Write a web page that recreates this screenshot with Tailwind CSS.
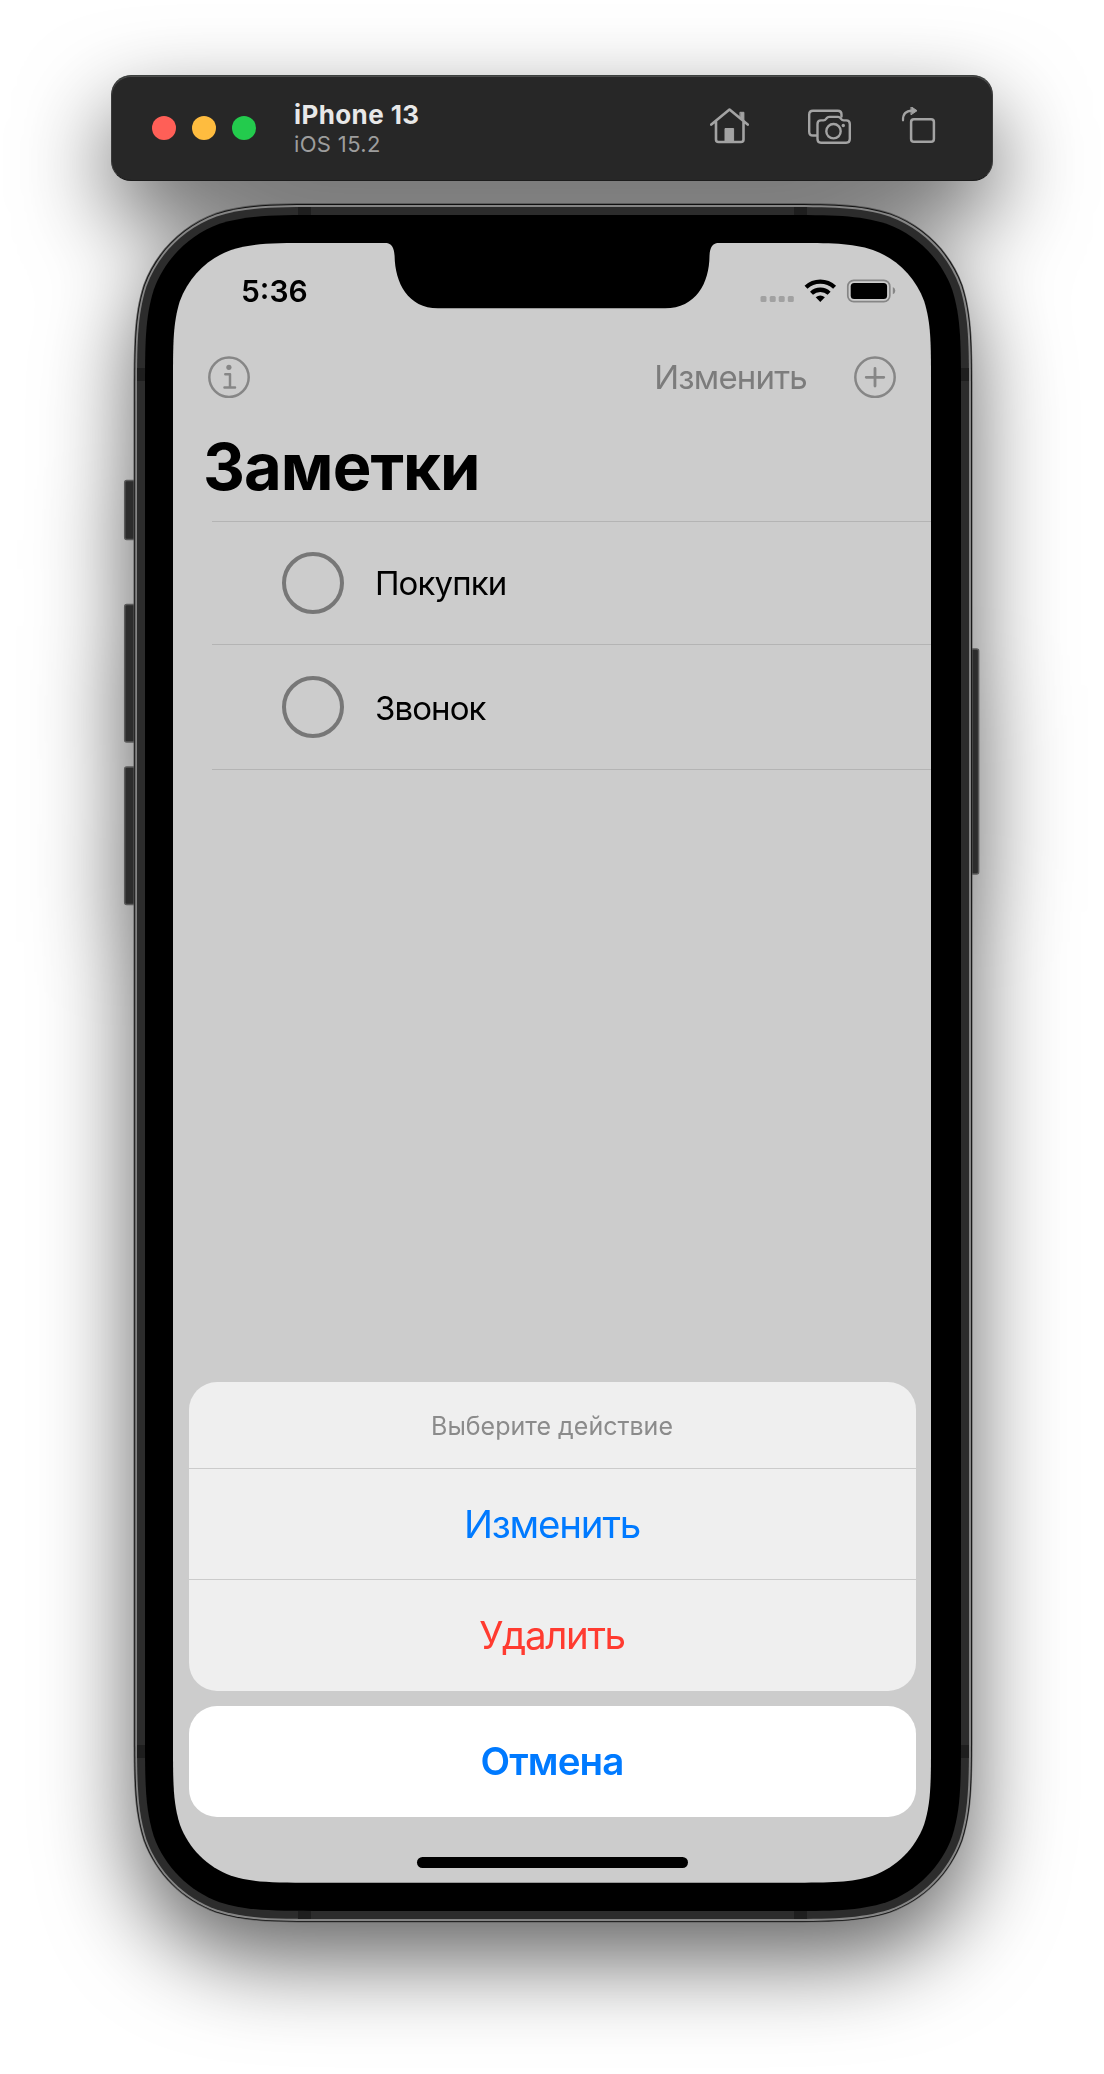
<!DOCTYPE html>
<html lang="ru">
<head>
<meta charset="utf-8">
<title>iPhone 13</title>
<script src="https://cdn.jsdelivr.net/npm/@tailwindcss/browser@4"></script>
</head>
<body class="bg-white font-['Inter',sans-serif]">
<div class="w-[1104px] h-[2074px] overflow-hidden">
<div class="w-[1104px] h-[2074px] pt-[75px] flex flex-col drop-shadow-[0_37px_45px_rgba(0,0,0,0.61)]">

  <!-- Simulator title bar -->
  <header class="ml-[111px] w-[882px] h-[106px] shrink-0 rounded-[20px] bg-[#272727] border border-t-[#3c403e] border-b-[#1c1c1c] border-x-[#3a3a3a] flex items-center pl-[40px] pr-[55px] shadow-[inset_0_1px_0_#4c4c4c]">
    <div class="flex gap-4">
      <span class="size-6 rounded-full bg-[#ff5f57]"></span>
      <span class="size-6 rounded-full bg-[#febc3f]"></span>
      <span class="size-6 rounded-full bg-[#23cb4d]"></span>
    </div>
    <div class="ml-[38px] pt-[2px] flex flex-col">
      <span class="text-[26px] leading-[30px] font-bold tracking-[0.4px] text-[#e8e8e8]">iPhone 13</span>
      <span class="text-[22px] leading-[28px] tracking-[0.35px] text-[#9d9d9d]">iOS 15.2</span>
    </div>
    <div class="ml-auto pb-[3px] flex text-[#a3a3a3]">
      <svg width="40" height="40" viewBox="710 107 40 40" fill="none" stroke="currentColor" stroke-width="2.6" stroke-linecap="round" stroke-linejoin="round"><path d="M711.3 124.6 729.5 109.5 747.7 124.6M716 121.5V139.5Q716 142 718.500 142H741Q743.500 142 743.500 139.500V121.500"/><path d="M740.300 112.300h3.600v8.700l-3.600-3z" fill="currentColor" stroke-width="1"/><path d="M725 142V128.500h8.600V142z" fill="currentColor" stroke-width="1"/></svg>
      <svg class="ml-[57px]" width="45" height="40" viewBox="807 107 45 40" fill="none" stroke="currentColor" stroke-width="2.4" stroke-linejoin="round" stroke-linecap="round"><path d="M816.500 135.500H813Q809.200 135.500 809.200 131.700V114.500Q809.200 110.700 813 110.700H837.700Q841.500 110.700 841.500 114.500V116.500"/><path d="M821 120.400H823.500Q825.200 120.400 826 119L826.800 118Q827.600 116.900 829.200 116.900H838Q839.600 116.900 840.400 118L841.200 119Q842 120.400 843.700 120.400H846.200Q849.800 120.400 849.800 124V139Q849.800 142.700 846.200 142.700H821Q817.500 142.700 817.500 139V124Q817.500 120.400 821 120.400Z"/><circle cx="833.500" cy="131.200" r="7.200"/><circle cx="843.300" cy="125.500" r="1.700" fill="currentColor" stroke="none"/></svg>
      <svg class="ml-[49px]" width="36" height="40" viewBox="901 106 36 40" fill="none" stroke="currentColor" stroke-width="2.500" stroke-linecap="round"><rect x="911.100" y="118.200" width="22.800" height="22.500" rx="2.800"/><path d="M903 119.300Q902.700 110 912 109.700" stroke-width="2.200"/><path d="M911.300 105.800 917 109.700 911.300 113.600Z" fill="currentColor" stroke-width="1" stroke-linejoin="round"/></svg>
    </div>
  </header>

  <!-- Device -->
  <main class="relative ml-[134px] mt-[22px] w-[838px] h-[1720px] shrink-0">
    <svg class="absolute left-0 top-0 overflow-visible" width="838" height="1720" viewBox="134 203 838 1720">
      <g fill="#2c2c2c" stroke="#5a5a5a" stroke-width="1.5">
        <rect x="124.700" y="480.500" width="14" height="59" rx="2"/>
        <rect x="124.700" y="604.500" width="14" height="137.500" rx="2"/>
        <rect x="124.700" y="767" width="14" height="137.500" rx="2"/>
        <rect x="965" y="649" width="13.600" height="225" rx="2"/>
      </g>
      <path class="shell" data-box="133.500 203 972.500 1922.500 130" fill="#5c5c5c"/>
      <path class="shell" data-box="134.300 204 971.900 1921.800 129" fill="#111"/>
      <path class="shell" data-box="135.200 205 971 1921 128" fill="#858585"/>
      <path class="shell" data-box="137 207 969 1919 126" fill="#2c2c2c"/>
      <path d="M298 207h13v8h-13zM794 207h13v8h-13zM298 1911h13v8h-13zM794 1911h13v8h-13zM137 368h8v13h-8zM961 368h8v13h-8zM137 1745h8v13h-8zM961 1745h8v13h-8z" fill="#1e1e1e"/>
      <path class="shell" data-box="145 215 961 1911 118" fill="#000"/>
      <path class="shell" data-box="173 243 931 1882.700 92" fill="#ccc"/>
      <path d="M383 242.500C392 243 394 247 394.600 256 395 283 408 308.300 438 308.300H665C696 308.300 709.300 283 709.500 256 710 247 712 243 721 242.500Z" fill="#000"/>
    </svg>

    <section class="absolute left-[39px] top-[40px] w-[758px] h-[1640px] flex flex-col">
      <!-- Status bar -->
      <div class="mt-[28px] h-[40px] pl-[68px] pr-[35px] flex items-center justify-between">
        <span class="text-[30px] leading-[40px] font-semibold text-black">5:36</span>
        <svg width="137" height="28" viewBox="759 277 137 28">
          <g fill="#a1a1a1"><rect x="760.500" y="296" width="6" height="6" rx="1.500"/><rect x="769.700" y="296" width="6" height="6" rx="1.500"/><rect x="778.700" y="296" width="6" height="6" rx="1.500"/><rect x="787.800" y="296" width="6" height="6" rx="1.500"/></g>
          <g fill="none" stroke="#000" stroke-width="4.300"><path d="M806 287.300A21 21 0 0 1 834.600 287.300"/><path d="M811.500 293.300A12.700 12.700 0 0 1 829.100 293.300"/></g>
          <path d="M815.700 297.300Q820.300 293.600 824.900 297.300L820.300 302Z"/>
          <rect x="847.800" y="280.300" width="42" height="21.400" rx="6" fill="none" stroke="#868686" stroke-width="1.700"/>
          <rect x="850.700" y="283" width="36.400" height="16" rx="3.500"/>
          <path d="M892.800 287Q895.300 288 895.300 290.700 895.300 293.300 892.800 294.300Z" fill="#868686"/>
        </svg>
      </div>

      <!-- Navigation bar -->
      <nav class="mt-[41px] h-[50px] pl-[35px] pr-[35px] flex items-center text-[#868686]">
        <svg width="42" height="42" viewBox="0 0 42 42" fill="none" stroke="currentColor" stroke-width="2.500"><circle cx="21" cy="21.300" r="19.700"/><path d="M17.300 18.200H22V31.500M16.500 31.500H27" stroke-linecap="round" stroke-linejoin="round"/><circle cx="20.900" cy="11.300" r="2.600" fill="currentColor" stroke="none"/></svg>
        <span class="ml-auto mr-[47px] text-[33px] leading-[50px] tracking-[-0.8px] text-[#7c7c7c]">Изменить</span>
        <svg width="42" height="42" viewBox="0 0 42 42" fill="none" stroke="currentColor" stroke-width="2.500"><circle cx="21" cy="21.300" r="19.700"/><path d="M21 12.500V30M12.200 21.300H29.800" stroke-width="2.800" stroke-linecap="round"/></svg>
      </nav>

      <h1 class="mt-[24px] pl-[30px] text-[65px] leading-[82px] -mb-[2px] font-bold tracking-[-0.95px] text-black">Заметки</h1>

      <ul class="mt-[15px] ml-[39px] border-y border-[#b4b4b4] text-[33px] tracking-[-0.9px] text-black">
        <li class="h-[122px] pl-[70px] flex items-center gap-[31px]">
          <span class="size-[62px] rounded-full border-4 border-[#777]"></span><span class="pt-[2px]">Покупки</span>
        </li>
        <li class="h-[125px] border-t border-[#b4b4b4] pl-[70px] flex items-center gap-[31px]">
          <span class="size-[62px] rounded-full border-4 border-[#777]"></span><span class="pt-[3px]">Звонок</span>
        </li>
      </ul>

      <!-- Action sheet -->
      <div class="mt-auto ml-[15.5px] mr-[15.5px] flex flex-col text-center text-[38.5px] tracking-[-1.2px] text-[#007aff]">
        <div class="h-[309px] rounded-[28px] bg-[#efefef] flex flex-col">
          <p class="h-[86px] leading-[88px] text-[25px] tracking-normal text-[#8b8b8b]">Выберите действие</p>
          <p class="h-[111px] leading-[111px] border-t border-[#cbcbcb]">Изменить</p>
          <p class="h-[112px] leading-[111px] border-t border-[#cbcbcb] tracking-[-1.35px] text-[#ff3b30]">Удалить</p>
        </div>
        <p class="mt-[15px] h-[111px] leading-[111px] rounded-[28px] bg-white font-semibold tracking-[-0.9px]">Отмена</p>
      </div>
      <div class="mt-[40px] mb-[15px] mx-auto w-[271px] h-[11px] rounded-full bg-black"></div>
    </section>
  </main>
</div>
</div>
<script>
  // Rounded rectangle with continuous-curvature corners
  function shell(l, t, r, b, k) {
    var a = 1.52866 * k, c = 1.08849 * k, d = 0.86841 * k, e = 0.63149 * k, f = 0.37282 * k, g = 0.16906 * k, h = 0.07491 * k;
    function corner(px, py, sx, sy, flip) {
      var pts = [[a, 0], [c, 0], [d, 0], [e, h], [f, g], [g, f], [h, e], [0, d], [0, c], [0, a]];
      if (flip) pts.reverse();
      var q = pts.map(function (p) { return (px + sx * p[0]).toFixed(2) + ' ' + (py + sy * p[1]).toFixed(2); });
      return 'L' + q[0] + 'C' + q.slice(1).join(' ');
    }
    var s = corner(l, t, 1, 1, true) + corner(r, t, -1, 1, false) + corner(r, b, -1, -1, true) + corner(l, b, 1, -1, false);
    return 'M' + s.slice(1) + 'Z';
  }
  document.querySelectorAll('.shell').forEach(function (p) {
    p.setAttribute('d', shell.apply(null, p.dataset.box.split(' ').map(Number)));
  });
</script>
</body>
</html>
